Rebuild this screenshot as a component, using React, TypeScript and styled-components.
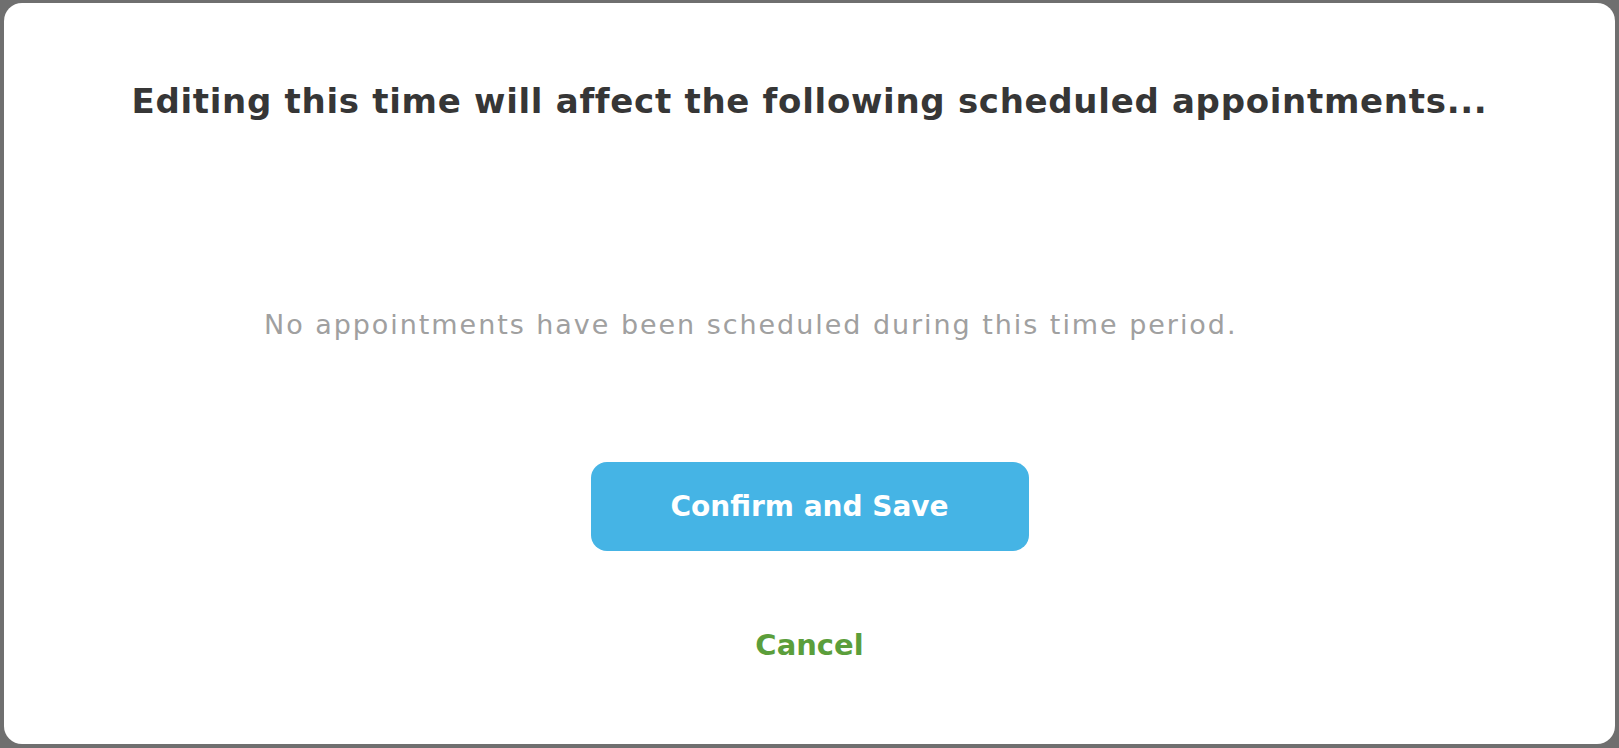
import React from "react";
import styled, { createGlobalStyle } from "styled-components";

const GlobalStyle = createGlobalStyle`
  html, body {
    margin: 0;
    padding: 0;
    height: 100%;
    background: #6f6f6f;
  }
  #root { height: 100%; }
  * { box-sizing: border-box; }
`;

const Backdrop = styled.div`
  width: 100vw;
  height: 100vh;
  padding: 3px 4px 4px 4px;
  background: #6f6f6f;
`;

const Dialog = styled.div`
  width: 100%;
  height: 100%;
  background: #ffffff;
  border-radius: 18px;
  display: flex;
  flex-direction: column;
  align-items: center;
  font-family: "DejaVu Sans", "Open Sans", sans-serif;
`;

const Title = styled.h2`
  margin: 78px 0 0 0;
  font-size: 34px;
  line-height: 40px;
  font-weight: 700;
  letter-spacing: 0.7px;
  color: #363636;
  text-align: center;
`;

const Message = styled.p`
  align-self: stretch;
  margin: 189px 0 0 0;
  padding-left: 260px;
  font-size: 27px;
  line-height: 30px;
  font-weight: 400;
  letter-spacing: 1.95px;
  color: #a0a0a0;
`;

const PrimaryButton = styled.button`
  margin-top: 122px;
  width: 438px;
  height: 89px;
  border: none;
  border-radius: 16px;
  background: #45b4e5;
  color: #ffffff;
  font-family: inherit;
  font-size: 28px;
  font-weight: 700;
  cursor: pointer;
`;

const TextButton = styled.button`
  margin-top: 76px;
  border: none;
  background: none;
  padding: 0;
  color: #5b9e3b;
  font-family: inherit;
  font-size: 29px;
  line-height: 36px;
  font-weight: 700;
  cursor: pointer;
`;

export default function App() {
  return (
    <>
      <GlobalStyle />
      <Backdrop>
        <Dialog>
          <Title>Editing this time will affect the following scheduled appointments...</Title>
          <Message>No appointments have been scheduled during this time period.</Message>
          <PrimaryButton>Confirm and Save</PrimaryButton>
          <TextButton>Cancel</TextButton>
        </Dialog>
      </Backdrop>
    </>
  );
}
